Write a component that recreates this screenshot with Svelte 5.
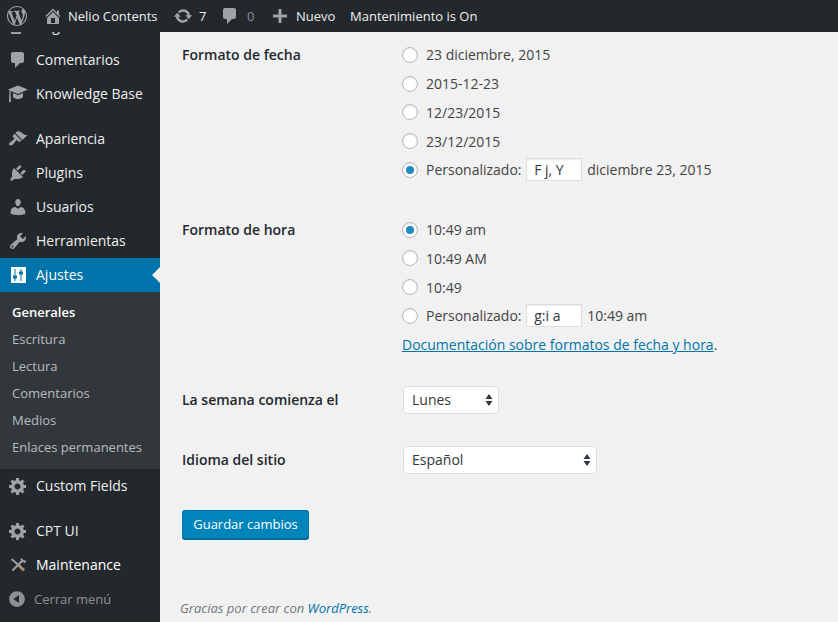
<script lang="ts">
  const icons: Record<string, string> = {
    wp: 'M20 10c0-5.51-4.49-10-10-10C4.48 0 0 4.49 0 10c0 5.52 4.48 10 10 10 5.51 0 10-4.48 10-10zM7.78 15.37L4.37 6.22c.55-.02 1.17-.08 1.17-.08.5-.06.44-1.13-.06-1.11 0 0-1.45.11-2.37.11-.18 0-.37 0-.58-.01C4.12 2.69 6.87 1.11 10 1.11c2.33 0 4.45.87 6.05 2.34-.68-.11-1.65.39-1.65 1.58 0 .74.45 1.36.9 2.1.35.61.55 1.36.55 2.46 0 1.49-1.4 5-1.4 5l-3.03-8.37c.54-.02.82-.17.82-.17.5-.05.44-1.25-.06-1.22 0 0-1.44.12-2.38.12-.87 0-2.33-.12-2.33-.12-.5-.03-.56 1.2-.06 1.22l.92.08 1.26 3.41zM17.41 10c.24-.64.74-1.87.43-4.25.7 1.29 1.05 2.71 1.05 4.25 0 3.29-1.73 6.24-4.4 7.78.97-2.59 1.94-5.2 2.92-7.78zM6.1 18.09C3.12 16.65 1.11 13.53 1.11 10c0-1.3.23-2.48.72-3.59C3.25 10.3 4.67 14.2 6.1 18.09zm4.03-6.63l2.58 6.98c-.86.29-1.76.45-2.71.45-.79 0-1.57-.11-2.29-.33.81-2.38 1.62-4.74 2.42-7.1z',
    home: 'M16 8.5l1.53 1.53-1.06 1.06L10 4.62l-6.47 6.47-1.06-1.06L10 2.5l4 4v-2h2v4zm-6-2.46l6 5.99V18H4v-5.97zM12 17v-5H8v5h4z',
    update: 'M10.2 3.28c3.53 0 6.43 2.61 6.92 6h2.08l-3.5 4-3.5-4h2.32c-.45-1.97-2.21-3.45-4.32-3.45-1.45 0-2.73.71-3.54 1.78L4.95 5.66C6.23 4.2 8.11 3.28 10.2 3.28zm-.4 13.44c-3.52 0-6.43-2.61-6.92-6H.8l3.5-4c1.17 1.33 2.33 2.67 3.5 4H5.48c.45 1.97 2.21 3.45 4.32 3.45 1.45 0 2.73-.71 3.54-1.78l1.71 1.95c-1.28 1.46-3.15 2.38-5.25 2.38z',
    comment: 'M5 2h9c1.1 0 2 .9 2 2v7c0 1.1-.9 2-2 2h-2l-5 5v-5H5c-1.1 0-2-.9-2-2V4c0-1.1.9-2 2-2z',
    plus: 'M17 8.5v3h-5.5V17h-3v-5.5H3v-3h5.5V3h3v5.5z',
    page: 'M3 2h10v16H3z',
    learn: 'M10 10L2.54 7.02 3 18H1l.48-11.82L0 5.61 10 1.5l10 4.11zM10 11.2l5-2.17V13c-1.5 1.5-3 2-5 2s-3.5-.5-5-2V9.03z',
    appearance: 'M14.48 11.06L7.41 3.99l1.5-1.5c.5-.56 2.3-.47 3.51.32 1.21.8 1.43 1.28 2.91 2.1 1.18.64 2.45 1.26 4.45.85zm-.71.71L6.7 4.7 4.93 6.47c-.39.39-.39 1.02 0 1.41l1.06 1.06c.39.39.39 1.03 0 1.42-.6.6-1.43 1.11-2.21 1.69-.35.26-.7.53-1.01.84C1.43 13.23.4 14.96 1.4 15.96c.99 1 2.92.1 4.24-1.17.32-.31.58-.67.83-1.03.57-.83 1.09-1.62 1.69-2.22.39-.39 1.03-.39 1.42 0l1.06 1.06c.39.39 1.02.39 1.41 0z',
    plugins: 'M13.11 4.36L9.87 7.6 8 5.73l3.24-3.24c.35-.34 1.05-.2 1.56.32.52.51.66 1.21.31 1.55zm-8 1.77l.91-1.12 9.01 9.01-1.19.84c-.71.71-2.63 1.16-3.82 1.16H6.14L4.9 17.26c-.59.59-1.54.59-2.12 0-.59-.58-.59-1.53 0-2.12l1.24-1.24v-3.88c0-1.13.4-3.19 1.09-3.89zm7.26 3.97l3.24-3.24c.34-.35 1.04-.21 1.55.31.52.51.66 1.21.31 1.55l-3.24 3.25z',
    users: 'M10 9.25c-2.27 0-2.73-3.44-2.73-3.44C7 4.02 7.82 2 9.97 2c2.16 0 2.98 2.02 2.71 3.81 0 0-.41 3.44-2.68 3.44zm0 2.57L12.72 10c2.39 0 4.52 2.33 4.52 4.53v2.49s-3.65 1.13-7.24 1.13c-3.65 0-7.24-1.13-7.24-1.13v-2.49c0-2.25 1.94-4.48 4.47-4.48z',
    tools: 'M16.68 9.77c-1.34 1.34-3.3 1.67-4.95.99l-5.41 6.52c-.99.99-2.59.99-3.58 0s-.99-2.59 0-3.57l6.52-5.42c-.68-1.65-.35-3.61.99-4.95 1.28-1.28 3.12-1.62 4.72-1.06l-2.89 2.89 2.82 2.82 2.86-2.87c.53 1.58.18 3.39-1.08 4.65zM3.81 16.21c.4.39 1.04.39 1.43 0 .4-.4.4-1.04 0-1.43-.39-.4-1.03-.4-1.43 0-.39.39-.39 1.03 0 1.43z',
    settings: 'M3 2h15v16H3zM6.5 4v6.5H5v3h1.5V16h1v-2.5H9v-3H7.5V4zM12.5 4v2.500h-1.500v3h1.500V16h1V9.500H15v-3h-1.500V4z',
    gear: 'M18 12h-2.18c-.17.7-.44 1.35-.81 1.93l1.54 1.54-2.1 2.1-1.54-1.54c-.58.36-1.23.63-1.91.79V19H8v-2.18c-.68-.16-1.33-.43-1.91-.79l-1.54 1.54-2.12-2.12 1.54-1.54c-.36-.58-.63-1.23-.79-1.91H1V9.03h2.17c.16-.7.44-1.35.8-1.94L2.43 5.55l2.1-2.1 1.54 1.54c.58-.37 1.24-.64 1.93-.81V2h3v2.18c.68.16 1.33.43 1.91.79l1.54-1.54 2.12 2.12-1.54 1.54c.36.59.64 1.24.8 1.94H18V12zm-8.5 1.5c1.66 0 3-1.34 3-3s-1.34-3-3-3-3 1.34-3 3 1.34 3 3 3z',
    collapse: 'M10 2.16c4.33 0 7.84 3.51 7.84 7.84s-3.51 7.84-7.84 7.84S2.16 14.33 2.16 10 5.71 2.16 10 2.16zm2 11.72V6.12L6.18 9.97z'
  };

  const subItems = ['Escritura', 'Lectura', 'Comentarios', 'Medios', 'Enlaces permanentes'];
  const dateFormats = ['23 diciembre, 2015', '2015-12-23', '12/23/2015', '23/12/2015'];
  const timeFormats = ['10:49 am', '10:49 AM', '10:49'];
</script>

{#snippet icon(name: string, size = 20)}
  <svg class="icon" viewBox="0 0 20 20" width={size} height={size} fill="currentColor" aria-hidden="true">
    <path fill-rule="evenodd" d={icons[name]} />
  </svg>
{/snippet}

{#snippet menuItem(name: string, label: string)}
  <a class="menu-item" href="#top">
    <span class="menu-icon">{@render icon(name)}</span>
    <span class="menu-label">{label}</span>
  </a>
{/snippet}

<div class="page">
  <header class="adminbar">
    <a class="bar-item logo" href="#top">{@render icon('wp')}</a>
    <a class="bar-item site" href="#top">{@render icon('home')}<span>Nelio Contents</span></a>
    <a class="bar-item updates" href="#top">{@render icon('update')}<span>7</span></a>
    <a class="bar-item comments" href="#top">{@render icon('comment')}<span>0</span></a>
    <a class="bar-item new" href="#top">{@render icon('plus')}<span>Nuevo</span></a>
    <a class="bar-item" href="#top">Mantenimiento is On</a>
  </header>

  <div class="columns">
    <nav class="sidebar">
      <div class="clipped-item">{@render menuItem('page', 'Páginas')}</div>
      {@render menuItem('comment', 'Comentarios')}
      {@render menuItem('learn', 'Knowledge Base')}
      <div class="separator"></div>
      {@render menuItem('appearance', 'Apariencia')}
      {@render menuItem('plugins', 'Plugins')}
      {@render menuItem('users', 'Usuarios')}
      {@render menuItem('tools', 'Herramientas')}
      <a class="menu-item active" href="#top">
        <span class="menu-icon">{@render icon('settings')}</span>
        <span class="menu-label">Ajustes</span>
        <span class="arrow"></span>
      </a>
      <ul class="submenu">
        <li><a class="current" href="#top">Generales</a></li>
        {#each subItems as item}
          <li><a href="#top">{item}</a></li>
        {/each}
      </ul>
      {@render menuItem('gear', 'Custom Fields')}
      <div class="separator"></div>
      {@render menuItem('gear', 'CPT UI')}
      <a class="menu-item bright" href="#top">
        <span class="menu-icon">
          <svg viewBox="0 0 20 20" width="20" height="20" fill="none" aria-hidden="true">
            <path d="M3.500 4l7.500 6.500" stroke="#9ea3a8" stroke-width="1.800" />
            <path d="M11 10.500l5 5" stroke="#a8926a" stroke-width="3" />
            <path d="M14.500 5.500L4.500 15.500" stroke="#9ea3a8" stroke-width="2" />
            <path d="M13 3.500l1.500 2 2 1.500 1-1.500" stroke="#9ea3a8" stroke-width="1.800" />
          </svg>
        </span>
        <span class="menu-label">Maintenance</span>
      </a>
      <button class="collapse" type="button">
        <span class="collapse-icon">{@render icon('collapse')}</span>
        <span>Cerrar menú</span>
      </button>
    </nav>

    <main class="content">
      <form class="settings">
        <div class="row">
          <div class="row-label">Formato de fecha</div>
          <div class="options">
            {#each dateFormats as format}
              <label class="option"><input type="radio" name="date" />{format}</label>
            {/each}
            <label class="option">
              <input type="radio" name="date" checked />Personalizado:
              <input class="format" type="text" value="F j, Y" />
              <span class="preview">diciembre 23, 2015</span>
            </label>
          </div>
        </div>

        <div class="row time">
          <div class="row-label">Formato de hora</div>
          <div class="options">
            {#each timeFormats as format, i}
              <label class="option"><input type="radio" name="time" checked={i === 0} />{format}</label>
            {/each}
            <label class="option">
              <input type="radio" name="time" />Personalizado:
              <input class="format" type="text" value="g:i a" />
              <span class="preview">10:49 am</span>
            </label>
            <div class="option"><a class="doc" href="#top">Documentación sobre formatos de fecha y hora</a>.</div>
          </div>
        </div>

        <div class="row week">
          <div class="row-label">La semana comienza el</div>
          <div class="select-wrap narrow">
            <select><option>Lunes</option></select>
            <svg class="updown" viewBox="0 0 8 14" width="8" height="14" aria-hidden="true">
              <path d="M4 1l3.500 5h-7zM4 13L.5 8h7z" fill="#32373c" />
            </svg>
          </div>
        </div>

        <div class="row lang">
          <div class="row-label">Idioma del sitio</div>
          <div class="select-wrap wide">
            <select><option>Español</option></select>
            <svg class="updown" viewBox="0 0 8 14" width="8" height="14" aria-hidden="true">
              <path d="M4 1l3.500 5h-7zM4 13L.5 8h7z" fill="#32373c" />
            </svg>
          </div>
        </div>

        <button class="save" type="button">Guardar cambios</button>
      </form>

      <p class="thanks">Gracias por crear con <a href="#top">WordPress</a>.</p>
    </main>
  </div>
</div>

<style>
  :global(body) {
    margin: 0;
    background: #f1f1f1;
    font-family: "Open Sans", "Liberation Sans", sans-serif;
  }

  a {
    color: inherit;
    text-decoration: none;
  }

  .page {
    height: 622px;
    overflow: hidden;
    display: flex;
    flex-direction: column;
  }

  .icon {
    display: block;
    flex-shrink: 0;
  }

  /* admin bar */
  .adminbar {
    position: relative;
    z-index: 1;
    height: 32px;
    flex-shrink: 0;
    display: flex;
    align-items: center;
    background: #23282d;
    color: #eee;
    font-size: 13px;
    padding-left: 7px;
  }

  .bar-item {
    display: flex;
    align-items: center;
    white-space: nowrap;
  }

  .bar-item .icon {
    color: #9ea3a8;
  }

  .logo {
    width: 37px;
  }

  .site {
    width: 130px;
    gap: 5px;
  }

  .site .icon {
    margin-left: -1px;
  }

  .updates {
    width: 49px;
    gap: 6px;
  }

  .updates .icon {
    margin-left: -1px;
  }

  .comments {
    width: 49px;
    gap: 7px;
  }

  .comments .icon {
    margin-left: -3px;
  }

  .comments span {
    color: #8d9196;
  }

  .new {
    width: 78px;
    gap: 6px;
  }

  .new .icon {
    margin-left: -2px;
  }

  /* sidebar */
  .columns {
    flex: 1;
    min-height: 0;
    display: flex;
  }

  .sidebar {
    width: 160px;
    flex-shrink: 0;
    overflow: hidden;
    background: #23282d;
    font-size: 14px;
  }

  .clipped-item {
    margin-top: -23px;
  }

  .menu-item {
    position: relative;
    display: flex;
    align-items: center;
    height: 34px;
    color: #eee;
  }

  .menu-icon {
    width: 36px;
    display: flex;
    justify-content: center;
    color: #9ea3a8;
  }

  .menu-label {
    margin-top: -2px;
  }

  .separator {
    height: 11px;
  }

  .menu-item.active {
    background: #0073aa;
    color: #fff;
  }

  .active .menu-icon {
    color: #fff;
  }

  .menu-item.bright {
    color: #fff;
  }

  .arrow {
    position: absolute;
    right: 0;
    top: 50%;
    margin-top: -8px;
    border: 8px solid transparent;
    border-left-width: 0;
    border-right-color: #f1f1f1;
  }

  .submenu {
    list-style: none;
    margin: 0;
    padding: 6px 0 9px;
    background: #32373c;
    font-size: 13px;
  }

  .submenu li {
    height: 27px;
    display: flex;
    align-items: center;
    padding-left: 12px;
    color: rgba(240, 245, 250, 0.7);
  }

  .submenu .current {
    color: #fff;
    font-weight: 600;
  }

  .collapse {
    display: flex;
    align-items: center;
    width: 100%;
    height: 34px;
    padding: 0;
    background: none;
    border: 0;
    color: #8d9196;
    font: inherit;
    font-size: 13px;
  }

  .collapse-icon {
    width: 34px;
    display: flex;
    justify-content: center;
  }

  /* settings form */
  .content {
    flex: 1;
    min-width: 0;
    display: flex;
    flex-direction: column;
    padding-left: 22px;
    color: #444;
    font-size: 14px;
  }

  .settings {
    flex: 1;
    padding-top: 8.5px;
  }

  .row {
    display: flex;
  }

  .row-label {
    width: 220px;
    flex-shrink: 0;
    color: #23282d;
    font-weight: 600;
    line-height: 28.75px;
  }

  .time .row-label {
    padding-top: 1px;
  }

  .options {
    display: flex;
    flex-direction: column;
  }

  .option {
    display: flex;
    align-items: center;
    height: 28.75px;
    white-space: pre;
  }

  input[type="radio"] {
    appearance: none;
    box-sizing: border-box;
    width: 16px;
    height: 16px;
    margin: 0 8px 0 0;
    border: 1px solid #b4b9be;
    border-radius: 50%;
    background: #fff;
    box-shadow: inset 0 1px 2px rgba(0, 0, 0, 0.1);
    display: grid;
    place-items: center;
  }

  input[type="radio"]:checked::before {
    content: "";
    width: 8px;
    height: 8px;
    border-radius: 50%;
    background: #1e8cbe;
  }

  .format {
    box-sizing: border-box;
    width: 56px;
    height: 23px;
    margin-left: 1px;
    padding: 0 7px;
    border: 1px solid #ddd;
    background: #fff;
    color: #32373c;
    font: inherit;
    box-shadow: inset 0 1px 2px rgba(0, 0, 0, 0.07);
  }

  .preview {
    margin-left: 5px;
  }

  .doc {
    color: #0073aa;
    text-decoration: underline;
  }

  .time {
    margin-top: 31px;
  }

  .week {
    margin-top: 27px;
    align-items: center;
  }

  .lang {
    margin-top: 31px;
    align-items: center;
  }

  .select-wrap {
    position: relative;
    height: 28px;
    margin-left: 1px;
  }

  .narrow {
    width: 96px;
  }

  .wide {
    width: 194px;
  }

  select {
    appearance: none;
    box-sizing: border-box;
    width: 100%;
    height: 100%;
    padding: 0 8px 2px;
    border: 1px solid #ddd;
    border-radius: 5px;
    background: #fff;
    color: #32373c;
    font: inherit;
  }

  .updown {
    position: absolute;
    right: 6px;
    top: 7px;
    pointer-events: none;
  }

  .save {
    display: block;
    box-sizing: border-box;
    width: 127px;
    height: 29px;
    margin-top: 35px;
    padding: 0;
    border: 1px solid #0073aa;
    border-bottom-color: #006799;
    border-radius: 3px;
    background: #0085ba;
    box-shadow: 0 1px 0 #006799;
    color: #fff;
    font: inherit;
    font-size: 13px;
  }

  .thanks {
    margin: 0 0 5px -2px;
    color: #72777c;
    font-size: 13px;
    font-style: italic;
    line-height: 18px;
  }

  .thanks a {
    color: #0073aa;
  }
</style>
